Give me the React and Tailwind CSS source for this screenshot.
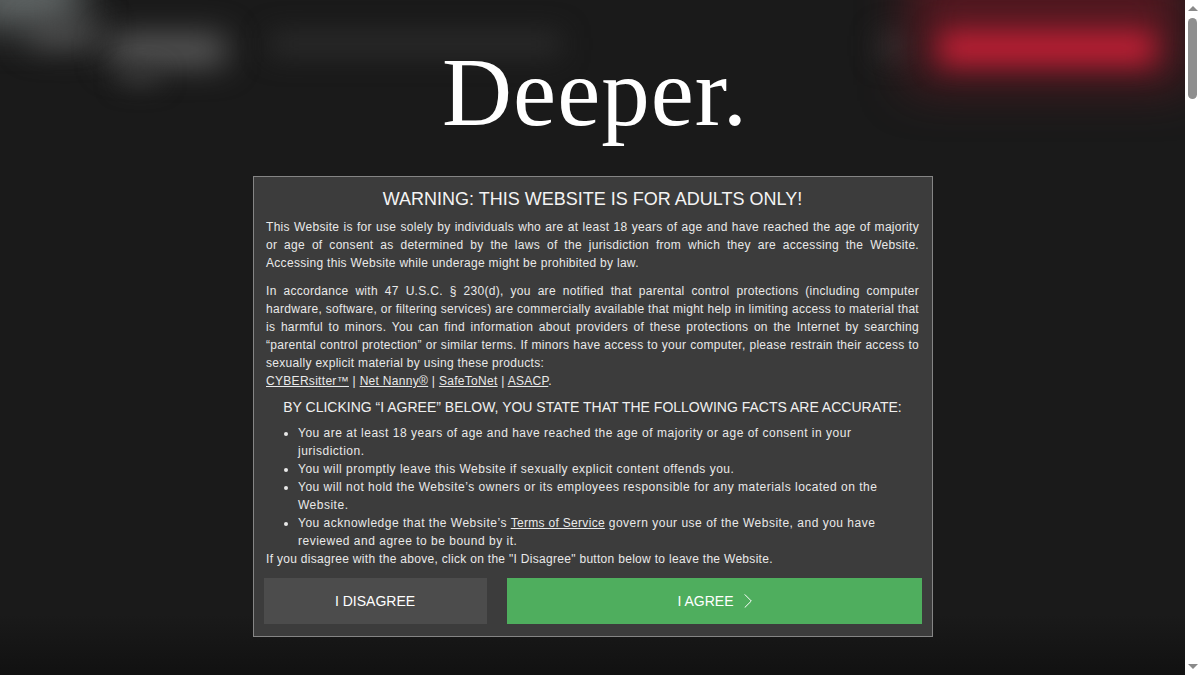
import React from 'react';

const facts = [
    <>You are at least 18 years of age and have reached the age of majority or age of consent in your jurisdiction.</>,
    <>You will promptly leave this Website if sexually explicit content offends you.</>,
    <>You will not hold the Website’s owners or its employees responsible for any materials located on the Website.</>,
    <>You acknowledge that the Website’s <a className="underline tracking-[0.3px]" href="#">Terms of Service</a> govern your use of the Website, and you have reviewed and agree to be bound by it.</>,
];

const BlurredHeader = () => (
    <div className="absolute inset-0 overflow-hidden">
        <div className="absolute left-[-30px] top-[-30px] w-[110px] h-[55px] bg-[#666c6c] blur-[20px]" />
        <div className="absolute left-[30px] top-[25px] w-[70px] h-[20px] bg-[#5a5a5a] blur-[16px]" />
        <div className="absolute left-[110px] top-[36px] w-[115px] h-[28px] bg-[#626262] blur-[16px]" />
        <div className="absolute left-[120px] top-[70px] w-[40px] h-[14px] bg-[#3a3a3a] blur-[12px]" />
        <div className="absolute left-[270px] top-[34px] w-[290px] h-[20px] bg-[#2e2e2e] blur-[14px]" />
        <div className="absolute left-[880px] top-[34px] w-[30px] h-[24px] bg-[#343434] blur-[14px]" />
        <div className="absolute left-[910px] top-[-40px] w-[275px] h-[125px] bg-[#521820] blur-[24px]" />
        <div className="absolute left-[940px] top-[32px] w-[214px] h-[32px] bg-[#c42036] blur-[14px]" />
        <div className="absolute left-0 right-0 bottom-0 h-[60px] bg-gradient-to-b from-transparent to-[#111111]" />
    </div>
);

const App = () => {
    return (
        <div className="flex h-[675px] overflow-hidden bg-white font-['Liberation_Sans',Arial,sans-serif]">
            <main className="relative flex-1 bg-[#1a1a1a] flex flex-col items-center">
                <BlurredHeader />
                <div className="relative h-[176px] pt-[44px] pl-[5px] font-['Liberation_Serif',serif] text-[97px] leading-none tracking-[1px] text-white">
                    Deeper.
                </div>
                <section className="relative ml-[1px] w-[680px] h-[461px] border border-[#858585] bg-[#3c3c3c] px-[10px] pt-[9px] text-[12px] leading-[18px] tracking-[0.3px] text-[#e9e9e9]">
                    <h1 className="pr-[1px] text-center text-[18px] leading-[26px] tracking-normal text-[#f4f4f4]">WARNING: THIS WEBSITE IS FOR ADULTS ONLY!</h1>
                    <div className="pl-[2px] pr-[3px]">
                        <p className="mt-[6px] text-justify">
                            This Website is for use solely by individuals who are at least 18 years of age and have reached the age of majority or age of consent as determined by the laws of the jurisdiction from which they are accessing the Website. Accessing this Website while underage might be prohibited by law.
                        </p>
                        <p className="mt-[10px] text-justify">
                            In accordance with 47 U.S.C. § 230(d), you are notified that parental control protections (including computer hardware, software, or filtering services) are commercially available that might help in limiting access to material that is harmful to minors. You can find information about providers of these protections on the Internet by searching “parental control protection” or similar terms. If minors have access to your computer, please restrain their access to sexually explicit material by using these products:
                            <br />
                            <a className="underline" href="#">CYBERsitter™</a> | <a className="underline" href="#">Net Nanny®</a> | <a className="underline" href="#">SafeToNet</a> | <a className="underline" href="#">ASACP</a>.
                        </p>
                        <h2 className="mt-[8px] text-center text-[14px] tracking-normal text-[#f0f0f0]">
                            BY CLICKING “I AGREE” BELOW, YOU STATE THAT THE FOLLOWING FACTS ARE ACCURATE:
                        </h2>
                        <ul className="mt-[8px] pl-[32px] list-disc tracking-[0.5px] pr-[29px]">
                            {facts.map((fact, index) => (
                                <li key={index}>{fact}</li>
                            ))}
                        </ul>
                        <p>If you disagree with the above, click on the "I Disagree" button below to leave the Website.</p>
                    </div>
                    <div className="mt-[10px] flex gap-[20px] text-[14px] tracking-normal text-white">
                        <button className="w-[223px] h-[46px] pr-[1px] bg-[#4c4c4c] flex items-center justify-center">I DISAGREE</button>
                        <button className="flex-1 h-[46px] bg-[#4fae5e] flex items-center justify-center gap-[10px]">
                            I AGREE
                            <svg className="w-[8px] h-[14px]" viewBox="0 0 8 14" fill="none" stroke="currentColor" strokeWidth="1">
                                <path d="M0.7 0.4 L7.3 7 L0.7 13.6" />
                            </svg>
                        </button>
                    </div>
                </section>
            </main>
            <aside className="w-[15px] bg-white flex flex-col items-center">
                <div className="mt-[6px] w-0 h-0 border-x-[5px] border-x-transparent border-b-[5px] border-b-[#8a8a8a]" />
                <div className="mt-[7px] w-[9px] h-[81px] rounded-[5px] bg-[#8f8f8f]" />
                <div className="mt-auto mb-[6px] w-0 h-0 border-x-[5px] border-x-transparent border-t-[5px] border-t-[#8a8a8a]" />
            </aside>
        </div>
    );
};

export default App;
